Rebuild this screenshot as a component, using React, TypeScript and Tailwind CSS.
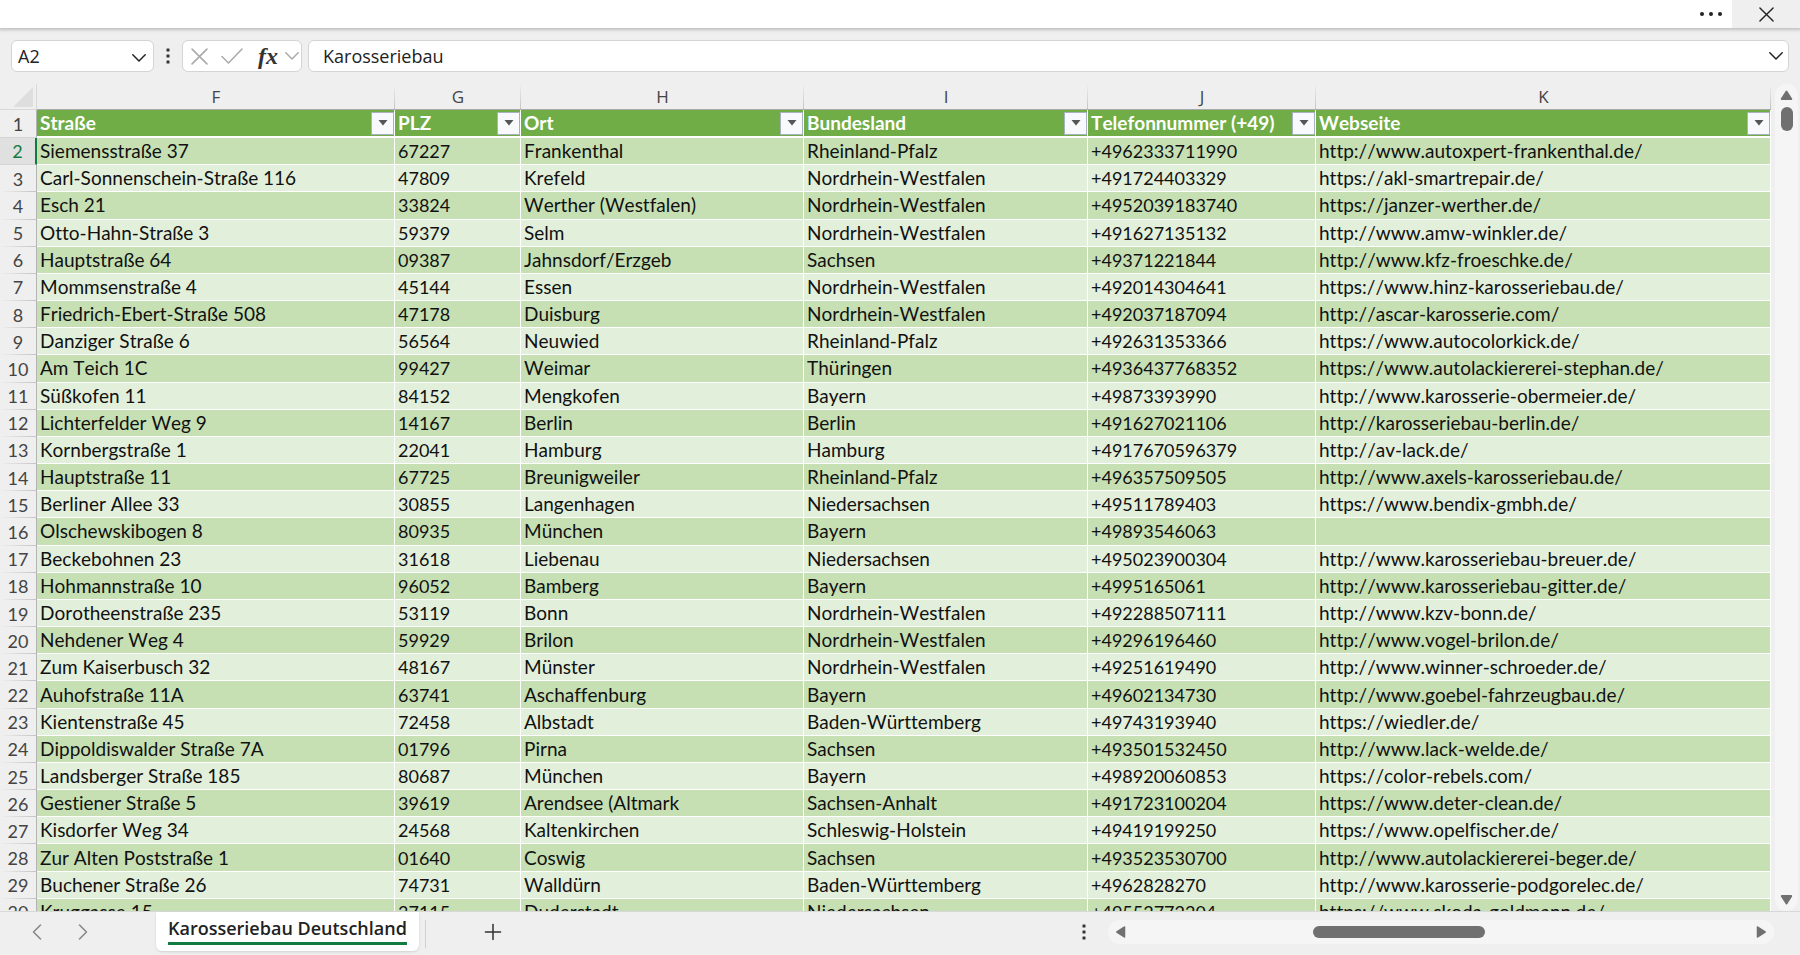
import { useState } from "react";
import { ChevronLeft, ChevronRight, Plus } from "lucide-react";

const columns = [
  { letter: "F", label: "Straße" },
  { letter: "G", label: "PLZ", numeric: true },
  { letter: "H", label: "Ort" },
  { letter: "I", label: "Bundesland" },
  { letter: "J", label: "Telefonnummer (+49)", numeric: true },
  { letter: "K", label: "Webseite" },
];

const rows = [
  ["Siemensstraße 37", "67227", "Frankenthal", "Rheinland-Pfalz", "+4962333711990", "http://www.autoxpert-frankenthal.de/"],
  ["Carl-Sonnenschein-Straße 116", "47809", "Krefeld", "Nordrhein-Westfalen", "+491724403329", "https://akl-smartrepair.de/"],
  ["Esch 21", "33824", "Werther (Westfalen)", "Nordrhein-Westfalen", "+4952039183740", "https://janzer-werther.de/"],
  ["Otto-Hahn-Straße 3", "59379", "Selm", "Nordrhein-Westfalen", "+491627135132", "http://www.amw-winkler.de/"],
  ["Hauptstraße 64", "09387", "Jahnsdorf/Erzgeb", "Sachsen", "+49371221844", "http://www.kfz-froeschke.de/"],
  ["Mommsenstraße 4", "45144", "Essen", "Nordrhein-Westfalen", "+492014304641", "https://www.hinz-karosseriebau.de/"],
  ["Friedrich-Ebert-Straße 508", "47178", "Duisburg", "Nordrhein-Westfalen", "+492037187094", "http://ascar-karosserie.com/"],
  ["Danziger Straße 6", "56564", "Neuwied", "Rheinland-Pfalz", "+492631353366", "https://www.autocolorkick.de/"],
  ["Am Teich 1C", "99427", "Weimar", "Thüringen", "+4936437768352", "https://www.autolackiererei-stephan.de/"],
  ["Süßkofen 11", "84152", "Mengkofen", "Bayern", "+49873393990", "http://www.karosserie-obermeier.de/"],
  ["Lichterfelder Weg 9", "14167", "Berlin", "Berlin", "+491627021106", "http://karosseriebau-berlin.de/"],
  ["Kornbergstraße 1", "22041", "Hamburg", "Hamburg", "+4917670596379", "http://av-lack.de/"],
  ["Hauptstraße 11", "67725", "Breunigweiler", "Rheinland-Pfalz", "+496357509505", "http://www.axels-karosseriebau.de/"],
  ["Berliner Allee 33", "30855", "Langenhagen", "Niedersachsen", "+49511789403", "https://www.bendix-gmbh.de/"],
  ["Olschewskibogen 8", "80935", "München", "Bayern", "+49893546063", ""],
  ["Beckebohnen 23", "31618", "Liebenau", "Niedersachsen", "+495023900304", "http://www.karosseriebau-breuer.de/"],
  ["Hohmannstraße 10", "96052", "Bamberg", "Bayern", "+4995165061", "http://www.karosseriebau-gitter.de/"],
  ["Dorotheenstraße 235", "53119", "Bonn", "Nordrhein-Westfalen", "+492288507111", "http://www.kzv-bonn.de/"],
  ["Nehdener Weg 4", "59929", "Brilon", "Nordrhein-Westfalen", "+49296196460", "http://www.vogel-brilon.de/"],
  ["Zum Kaiserbusch 32", "48167", "Münster", "Nordrhein-Westfalen", "+49251619490", "http://www.winner-schroeder.de/"],
  ["Auhofstraße 11A", "63741", "Aschaffenburg", "Bayern", "+49602134730", "http://www.goebel-fahrzeugbau.de/"],
  ["Kientenstraße 45", "72458", "Albstadt", "Baden-Württemberg", "+49743193940", "https://wiedler.de/"],
  ["Dippoldiswalder Straße 7A", "01796", "Pirna", "Sachsen", "+493501532450", "http://www.lack-welde.de/"],
  ["Landsberger Straße 185", "80687", "München", "Bayern", "+498920060853", "https://color-rebels.com/"],
  ["Gestiener Straße 5", "39619", "Arendsee (Altmark", "Sachsen-Anhalt", "+491723100204", "https://www.deter-clean.de/"],
  ["Kisdorfer Weg 34", "24568", "Kaltenkirchen", "Schleswig-Holstein", "+49419199250", "https://www.opelfischer.de/"],
  ["Zur Alten Poststraße 1", "01640", "Coswig", "Sachsen", "+493523530700", "http://www.autolackiererei-beger.de/"],
  ["Buchener Straße 26", "74731", "Walldürn", "Baden-Württemberg", "+4962828270", "http://www.karosserie-podgorelec.de/"],
  ["Kruggasse 15", "37115", "Duderstadt", "Niedersachsen", "+49552772204", "https://www.skoda-goldmann.de/"],
];

function Arrow({ className }: { className: string }) {
  return (
    <svg viewBox="0 0 12 10" className={className} aria-hidden="true">
      <path d="M5.2 1 Q6 0 6.8 1 L11.6 8.4 Q12 10 10.8 10 H1.2 Q0 10 .4 8.4 Z" fill="currentColor" />
    </svg>
  );
}

function Dots({ className }: { className: string }) {
  return (
    <svg viewBox="0 0 4 16" className={className} fill="currentColor" aria-hidden="true">
      <rect x="0.5" y="0.5" width="3" height="3" rx="0.5" />
      <rect x="0.5" y="6.5" width="3" height="3" rx="0.5" />
      <rect x="0.5" y="12.5" width="3" height="3" rx="0.5" />
    </svg>
  );
}

function Cross({ className }: { className: string }) {
  return (
    <svg viewBox="0 0 16 16" className={className} fill="none" stroke="currentColor" aria-hidden="true">
      <path d="M1 1L15 15M15 1L1 15" strokeWidth="1.5" strokeLinecap="round" />
    </svg>
  );
}

function Caret({ className }: { className: string }) {
  return (
    <svg viewBox="0 0 14 8" className={className} fill="none" stroke="currentColor" aria-hidden="true">
      <path d="M0.8 0.8L7 7L13.2 0.8" strokeWidth="1.5" strokeLinecap="round" strokeLinejoin="round" />
    </svg>
  );
}

function TitleStrip() {
  return (
    <header className="relative z-10 flex h-7 shrink-0 justify-end bg-white shadow-[0_1px_3px_1px_rgba(0,0,0,0.2)]">
      <button aria-label="More options" className="flex w-[42px] items-center justify-center text-[#222]">
        <svg viewBox="0 0 22 4" className="h-1 w-[22px]" fill="currentColor">
          <circle cx="2" cy="2" r="2" />
          <circle cx="11" cy="2" r="2" />
          <circle cx="20" cy="2" r="2" />
        </svg>
      </button>
      <button aria-label="Close" className="flex w-[68px] items-center justify-center bg-[#efefef] text-[#222]">
        <Cross className="size-[15px]" />
      </button>
    </header>
  );
}

function FormulaBar() {
  const [value, setValue] = useState("Karosseriebau");

  return (
    <div className="flex h-14 shrink-0 items-center px-[11px] font-['Open_Sans',sans-serif] text-[18px] text-[#222]">
      <div className="relative w-[143px]">
        <select
          aria-label="Name box"
          className="h-8 w-full appearance-none rounded-md border border-[#d4d4d4] bg-white pl-1.5 outline-none"
        >
          <option>A2</option>
        </select>
        <Caret className="pointer-events-none absolute top-3.5 right-2 h-2 w-3.5" />
      </div>
      <Dots className="mx-3 h-4 w-1 text-[#333]" />
      <div className="flex h-8 w-[120px] items-center justify-between rounded-md border border-[#d4d4d4] bg-white pr-0.5 pl-2 text-[#aaa]">
        <button aria-label="Cancel">
          <Cross className="size-[17px]" />
        </button>
        <button aria-label="Enter" className="ml-1.5">
          <svg viewBox="0 0 22 16" className="h-4 w-[22px]" fill="none" stroke="currentColor">
            <path d="M1 8.5L7.5 15L21 1" strokeWidth="1.5" strokeLinecap="round" />
          </svg>
        </button>
        <button
          aria-label="Insert function"
          className="ml-2 font-['Liberation_Serif',serif] text-[24px] leading-6 font-bold text-[#333] italic"
        >
          fx
        </button>
        <Caret className="h-2 w-3.5" />
      </div>
      <div className="relative ml-1.5 flex-1">
        <input
          aria-label="Formula bar"
          value={value}
          onChange={(e) => setValue(e.target.value)}
          className="h-8 w-full rounded-md border border-[#d4d4d4] bg-white pr-8 pl-3.5 outline-none"
        />
        <button aria-label="Expand formula bar" className="absolute top-3 right-1.5">
          <Caret className="block h-2 w-3.5" />
        </button>
      </div>
    </div>
  );
}

function Sheet() {
  return (
    <div className="min-w-0 flex-1 overflow-hidden">
      <table className="h-[842px] w-full table-fixed border-separate border-spacing-0 font-[Lato,sans-serif] text-[19px] leading-6 whitespace-nowrap text-[#111] [font-kerning:none] [font-variant-ligatures:none]">
        <colgroup>
          <col className="w-[37px]" />
          <col className="w-[358px]" />
          <col className="w-[126px]" />
          <col className="w-[283px]" />
          <col className="w-[284px]" />
          <col className="w-[228px]" />
          <col />
        </colgroup>
        <thead>
          <tr className="h-[26px] font-['Open_Sans',sans-serif] text-[17px] text-[#444]">
            <th className="border-r border-b border-r-[#d8d8d8] border-b-[#d8d8d8] p-0">
              <svg viewBox="0 0 20 20" className="mr-[3px] ml-auto size-5" aria-hidden="true">
                <path d="M20 0V20H0Z" fill="#dedede" />
              </svg>
            </th>
            {columns.map((col) => (
              <th
                key={col.letter}
                className="border-b border-[#a8a8a8] bg-[linear-gradient(to_bottom,#efefef,#c4c4c4)] bg-[length:1px_100%] bg-right bg-no-repeat p-0 font-normal"
              >
                {col.letter}
              </th>
            ))}
          </tr>
          <tr className="h-7 bg-[#70ad47] text-white">
            <th className="border-r border-b border-r-[#b4b4b4] border-b-[#d4d4d4] bg-[#efefef] p-0 text-[18px] font-normal text-[#444]">
              1
            </th>
            {columns.map((col) => (
              <th key={col.letter} className="border-r border-b-2 border-white p-0 pl-[3px] font-bold">
                <div className="flex items-center justify-between">
                  {col.label}
                  <button
                    aria-label={`Filter ${col.label}`}
                    className="flex size-[23px] items-center justify-center border border-[#a9b0c0] bg-[#f8f9fc]"
                  >
                    <svg viewBox="0 0 10 6" className="h-[6px] w-[10px]" aria-hidden="true">
                      <path d="M0.5 0H9.5L5 5.5Z" fill="#555" />
                    </svg>
                  </button>
                </div>
              </th>
            ))}
          </tr>
        </thead>
        <tbody>
          {rows.map((row, i) => (
            <tr key={i} className="h-[27px] odd:bg-[#c6e0b4] even:bg-[#e2efda]">
              <th
                scope="row"
                className={
                  i === 0
                    ? "border-r-2 border-b border-r-[#107c41] border-b-[#d4d4d4] bg-[#e0e0e0] p-0 text-[18px] font-normal text-[#107c41]"
                    : "border-r border-r-[#b4b4b4] bg-[#efefef] bg-[linear-gradient(to_right,#efefef,#c4c4c4)] bg-[length:100%_1px] bg-bottom bg-no-repeat p-0 text-[18px] font-normal text-[#444]"
                }
              >
                {i + 2}
              </th>
              {row.map((cell, j) => (
                <td
                  key={j}
                  className={
                    columns[j].numeric
                      ? "border-r border-b border-white p-0 pl-[3px] text-[18px]"
                      : "border-r border-b border-white p-0 pl-[3px]"
                  }
                >
                  {cell}
                </td>
              ))}
            </tr>
          ))}
        </tbody>
      </table>
    </div>
  );
}

function VerticalScroll() {
  return (
    <div className="mr-[2px] ml-1 flex w-[23px] shrink-0 flex-col items-center gap-[7px] rounded-xl bg-[#f5f5f5] py-1.5 text-[#707070]">
      <button aria-label="Scroll up">
        <Arrow className="block h-[10px] w-[13px]" />
      </button>
      <div className="h-6 w-3 rounded-full bg-current" />
      <button aria-label="Scroll down" className="mt-auto">
        <Arrow className="block h-[10px] w-[13px] rotate-180" />
      </button>
    </div>
  );
}

function TabBar() {
  return (
    <footer className="flex h-11 shrink-0 border-t border-[#d8d8d8] pb-1 text-[#333]">
      <div className="flex w-[156px] items-center gap-[18px] pl-[23px] text-[#888]">
        <button aria-label="Previous sheet">
          <ChevronLeft className="size-7" strokeWidth={1.3} />
        </button>
        <button aria-label="Next sheet">
          <ChevronRight className="size-7" strokeWidth={1.3} />
        </button>
      </div>
      <button className="rounded-b-md bg-white px-3 pb-1 font-['Open_Sans',sans-serif] text-[18px] font-semibold text-[#222] shadow-sm">
        <span className="block border-b-[3px] border-[#107c41] leading-7">Karosseriebau Deutschland</span>
      </button>
      <div className="mt-2 ml-1.5 h-7 w-px bg-[#d0d0d0]" />
      <button aria-label="New sheet" className="ml-[54px] self-center">
        <Plus className="size-[26px]" strokeWidth={1.4} />
      </button>
      <div className="ml-auto flex items-center">
        <Dots className="mr-[22px] h-4 w-1" />
        <div className="mr-[26px] flex h-6 w-[666px] items-center rounded-xl bg-[#f5f5f5] px-1.5 text-[#707070]">
          <button aria-label="Scroll left">
            <Arrow className="h-[10px] w-[13px] -rotate-90" />
          </button>
          <div className="ml-[186px] h-3 w-[172px] rounded-full bg-current" />
          <button aria-label="Scroll right" className="ml-auto">
            <Arrow className="h-[10px] w-[13px] rotate-90" />
          </button>
        </div>
      </div>
    </footer>
  );
}

export default function App() {
  return (
    <div className="flex h-screen flex-col overflow-hidden bg-[#efefef]">
      <TitleStrip />
      <FormulaBar />
      <main className="flex min-h-0 flex-1">
        <Sheet />
        <VerticalScroll />
      </main>
      <TabBar />
    </div>
  );
}
